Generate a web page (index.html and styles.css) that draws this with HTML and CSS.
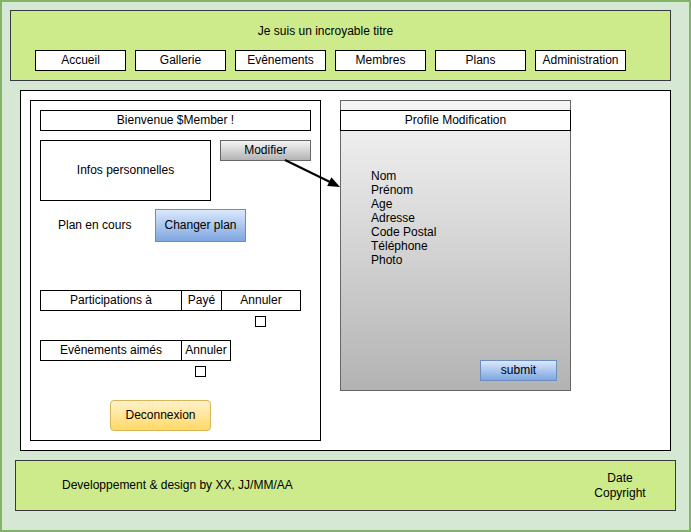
FILE: index.html
```html
<!DOCTYPE html>
<html lang="fr">
<head>
<meta charset="utf-8">
<title>Mockup</title>
<link rel="stylesheet" href="styles.css">
</head>
<body>
<div class="page">
  <header class="header">
    <div class="title">Je suis un incroyable titre</div>
    <nav class="nav">
      <div class="nav-btn">Accueil</div>
      <div class="nav-btn">Gallerie</div>
      <div class="nav-btn">Evênements</div>
      <div class="nav-btn">Membres</div>
      <div class="nav-btn">Plans</div>
      <div class="nav-btn">Administration</div>
    </nav>
  </header>
  <main class="main">
    <section class="member">
      <div class="welcome">Bienvenue $Member !</div>
      <div class="row-infos">
        <div class="infos">Infos personnelles</div>
        <div class="btn btn-gray">Modifier</div>
      </div>
      <div class="row-plan">
        <span class="plan-label">Plan en cours</span>
        <div class="btn btn-blue btn-plan">Changer plan</div>
      </div>
      <div class="grid grid-part">
        <div class="cell c-part">Participations à</div>
        <div class="cell c-paye">Payé</div>
        <div class="cell c-ann">Annuler</div>
      </div>
      <div class="check check-part"></div>
      <div class="grid grid-likes">
        <div class="cell c-part">Evênements aimés</div>
        <div class="cell c-ann2">Annuler</div>
      </div>
      <div class="check check-likes"></div>
      <div class="btn btn-yellow">Deconnexion</div>
    </section>
    <section class="profile">
      <div class="profile-title">Profile Modification</div>
      <ul class="fields">
        <li>Nom</li>
        <li>Prénom</li>
        <li>Age</li>
        <li>Adresse</li>
        <li>Code Postal</li>
        <li>Téléphone</li>
        <li>Photo</li>
      </ul>
      <div class="btn btn-blue btn-submit">submit</div>
    </section>
  </main>
  <footer class="footer">
    <div class="credits">Developpement &amp; design by XX, JJ/MM/AA</div>
    <div class="copyright">Date<br>Copyright</div>
  </footer>
  <svg class="arrow" width="691" height="532" viewBox="0 0 691 532" aria-hidden="true">
    <line x1="285" y1="160" x2="330" y2="182" stroke="#000" stroke-width="2"/>
    <polygon points="340,187 327.2,185.9 331.4,177.3" fill="#000"/>
  </svg>
</div>
</body>
</html>
```
FILE: styles.css
```css
* { box-sizing: border-box; }

html, body {
  margin: 0;
  padding: 0;
  background: #ffffff;
}

body {
  font-family: "Liberation Sans", Arial, Helvetica, sans-serif;
  font-size: 12px;
  color: #000;
}

.page {
  position: relative;
  width: 691px;
  height: 532px;
  background: #d5e8d4;
  border: 2px solid #82b366;
  display: flex;
  flex-direction: column;
  align-items: flex-start;
}

/* Header */
.header {
  margin: 8px 0 0 8px;
  width: 661px;
  height: 71px;
  background: #cdeb8b;
  border: 1px solid #36393d;
  padding: 13px 0 0 0;
}

.title {
  line-height: 14px;
  text-align: center;
  padding-right: 30px;
}

.nav {
  display: flex;
  gap: 9px;
  margin-top: 12px;
  padding-left: 24px;
}

.nav-btn {
  width: 91px;
  height: 21px;
  background: #fff;
  border: 1px solid #000;
  display: flex;
  align-items: center;
  justify-content: center;
  padding-bottom: 1px;
}

/* Main */
.main {
  margin: 9px 0 0 18px;
  width: 651px;
  height: 361px;
  background: #fff;
  border: 1px solid #000;
  padding: 9px;
  display: flex;
  align-items: flex-start;
  gap: 19px;
}

.member {
  width: 291px;
  height: 341px;
  border: 1px solid #000;
  padding: 9px 0 0 9px;
  display: flex;
  flex-direction: column;
  align-items: flex-start;
}

.welcome {
  width: 271px;
  height: 21px;
  border: 1px solid #000;
  display: flex;
  align-items: center;
  justify-content: center;
  padding-bottom: 1px;
}

.row-infos {
  display: flex;
  align-items: flex-start;
  margin-top: 9px;
}

.infos {
  width: 171px;
  height: 61px;
  border: 1px solid #000;
  display: flex;
  align-items: center;
  justify-content: center;
  padding-bottom: 1px;
}

.btn {
  display: flex;
  align-items: center;
  justify-content: center;
  border: 1px solid #666;
  padding-bottom: 1px;
}

.btn-gray {
  margin-left: 9px;
  width: 91px;
  height: 21px;
  background: linear-gradient(#f5f5f5, #b3b3b3);
  border-color: #666666;
}

.btn-blue {
  background: linear-gradient(#dae8fc, #7ea6e0);
  border-color: #6c8ebf;
}

.row-plan {
  display: flex;
  align-items: center;
  margin-top: 8px;
}

.plan-label {
  width: 115px;
  padding-left: 18px;
  padding-bottom: 1px;
}

.btn-plan {
  width: 91px;
  height: 33px;
}

.grid {
  display: flex;
  height: 21px;
  border: 1px solid #000;
}

.grid-part { margin-top: 48px; }
.grid-likes { margin-top: 13px; }

.cell {
  display: flex;
  align-items: center;
  justify-content: center;
  height: 100%;
  padding-bottom: 1px;
}

.cell + .cell { border-left: 1px solid #000; }

.c-part { width: 140px; }
.c-paye { width: 40px; }
.c-ann { width: 79px; }
.c-ann2 { width: 49px; }

.check {
  width: 11px;
  height: 11px;
  border: 1px solid #000;
  background: #fff;
  margin-top: 5px;
}

.check-part { margin-left: 215px; }
.check-likes { margin-left: 155px; }

.btn-yellow {
  margin: 23px 0 0 70px;
  width: 101px;
  height: 31px;
  border-radius: 4px;
  background: linear-gradient(#fff2cc, #ffd966);
  border-color: #d6b656;
}

/* Profile panel */
.profile {
  width: 231px;
  height: 291px;
  border: 1px solid #666;
  background: linear-gradient(#f5f5f5, #b3b3b3);
  padding: 9px 0 9px 0;
  display: flex;
  flex-direction: column;
  align-items: flex-start;
}

.profile-title {
  margin: 0 -1px;
  width: calc(100% + 2px);
  height: 21px;
  background: #fff;
  border: 1px solid #000;
  display: flex;
  align-items: center;
  justify-content: center;
  padding-bottom: 1px;
}

.fields {
  list-style: none;
  margin: 38px 0 0 0;
  padding: 0 0 0 30px;
  line-height: 14px;
}

.btn-submit {
  margin: auto 0 0 139px;
  width: 77px;
  height: 21px;
}

/* Footer */
.footer {
  margin: 9px 0 0 13px;
  width: 661px;
  height: 51px;
  background: #cdeb8b;
  border: 1px solid #36393d;
  display: flex;
  align-items: center;
  justify-content: space-between;
  padding: 0 15px 0 46px;
}

.credits { padding-bottom: 1px; }

.copyright {
  width: 80px;
  text-align: center;
  line-height: 15px;
}

.arrow {
  position: absolute;
  left: -2px;
  top: -2px;
  pointer-events: none;
}
```
